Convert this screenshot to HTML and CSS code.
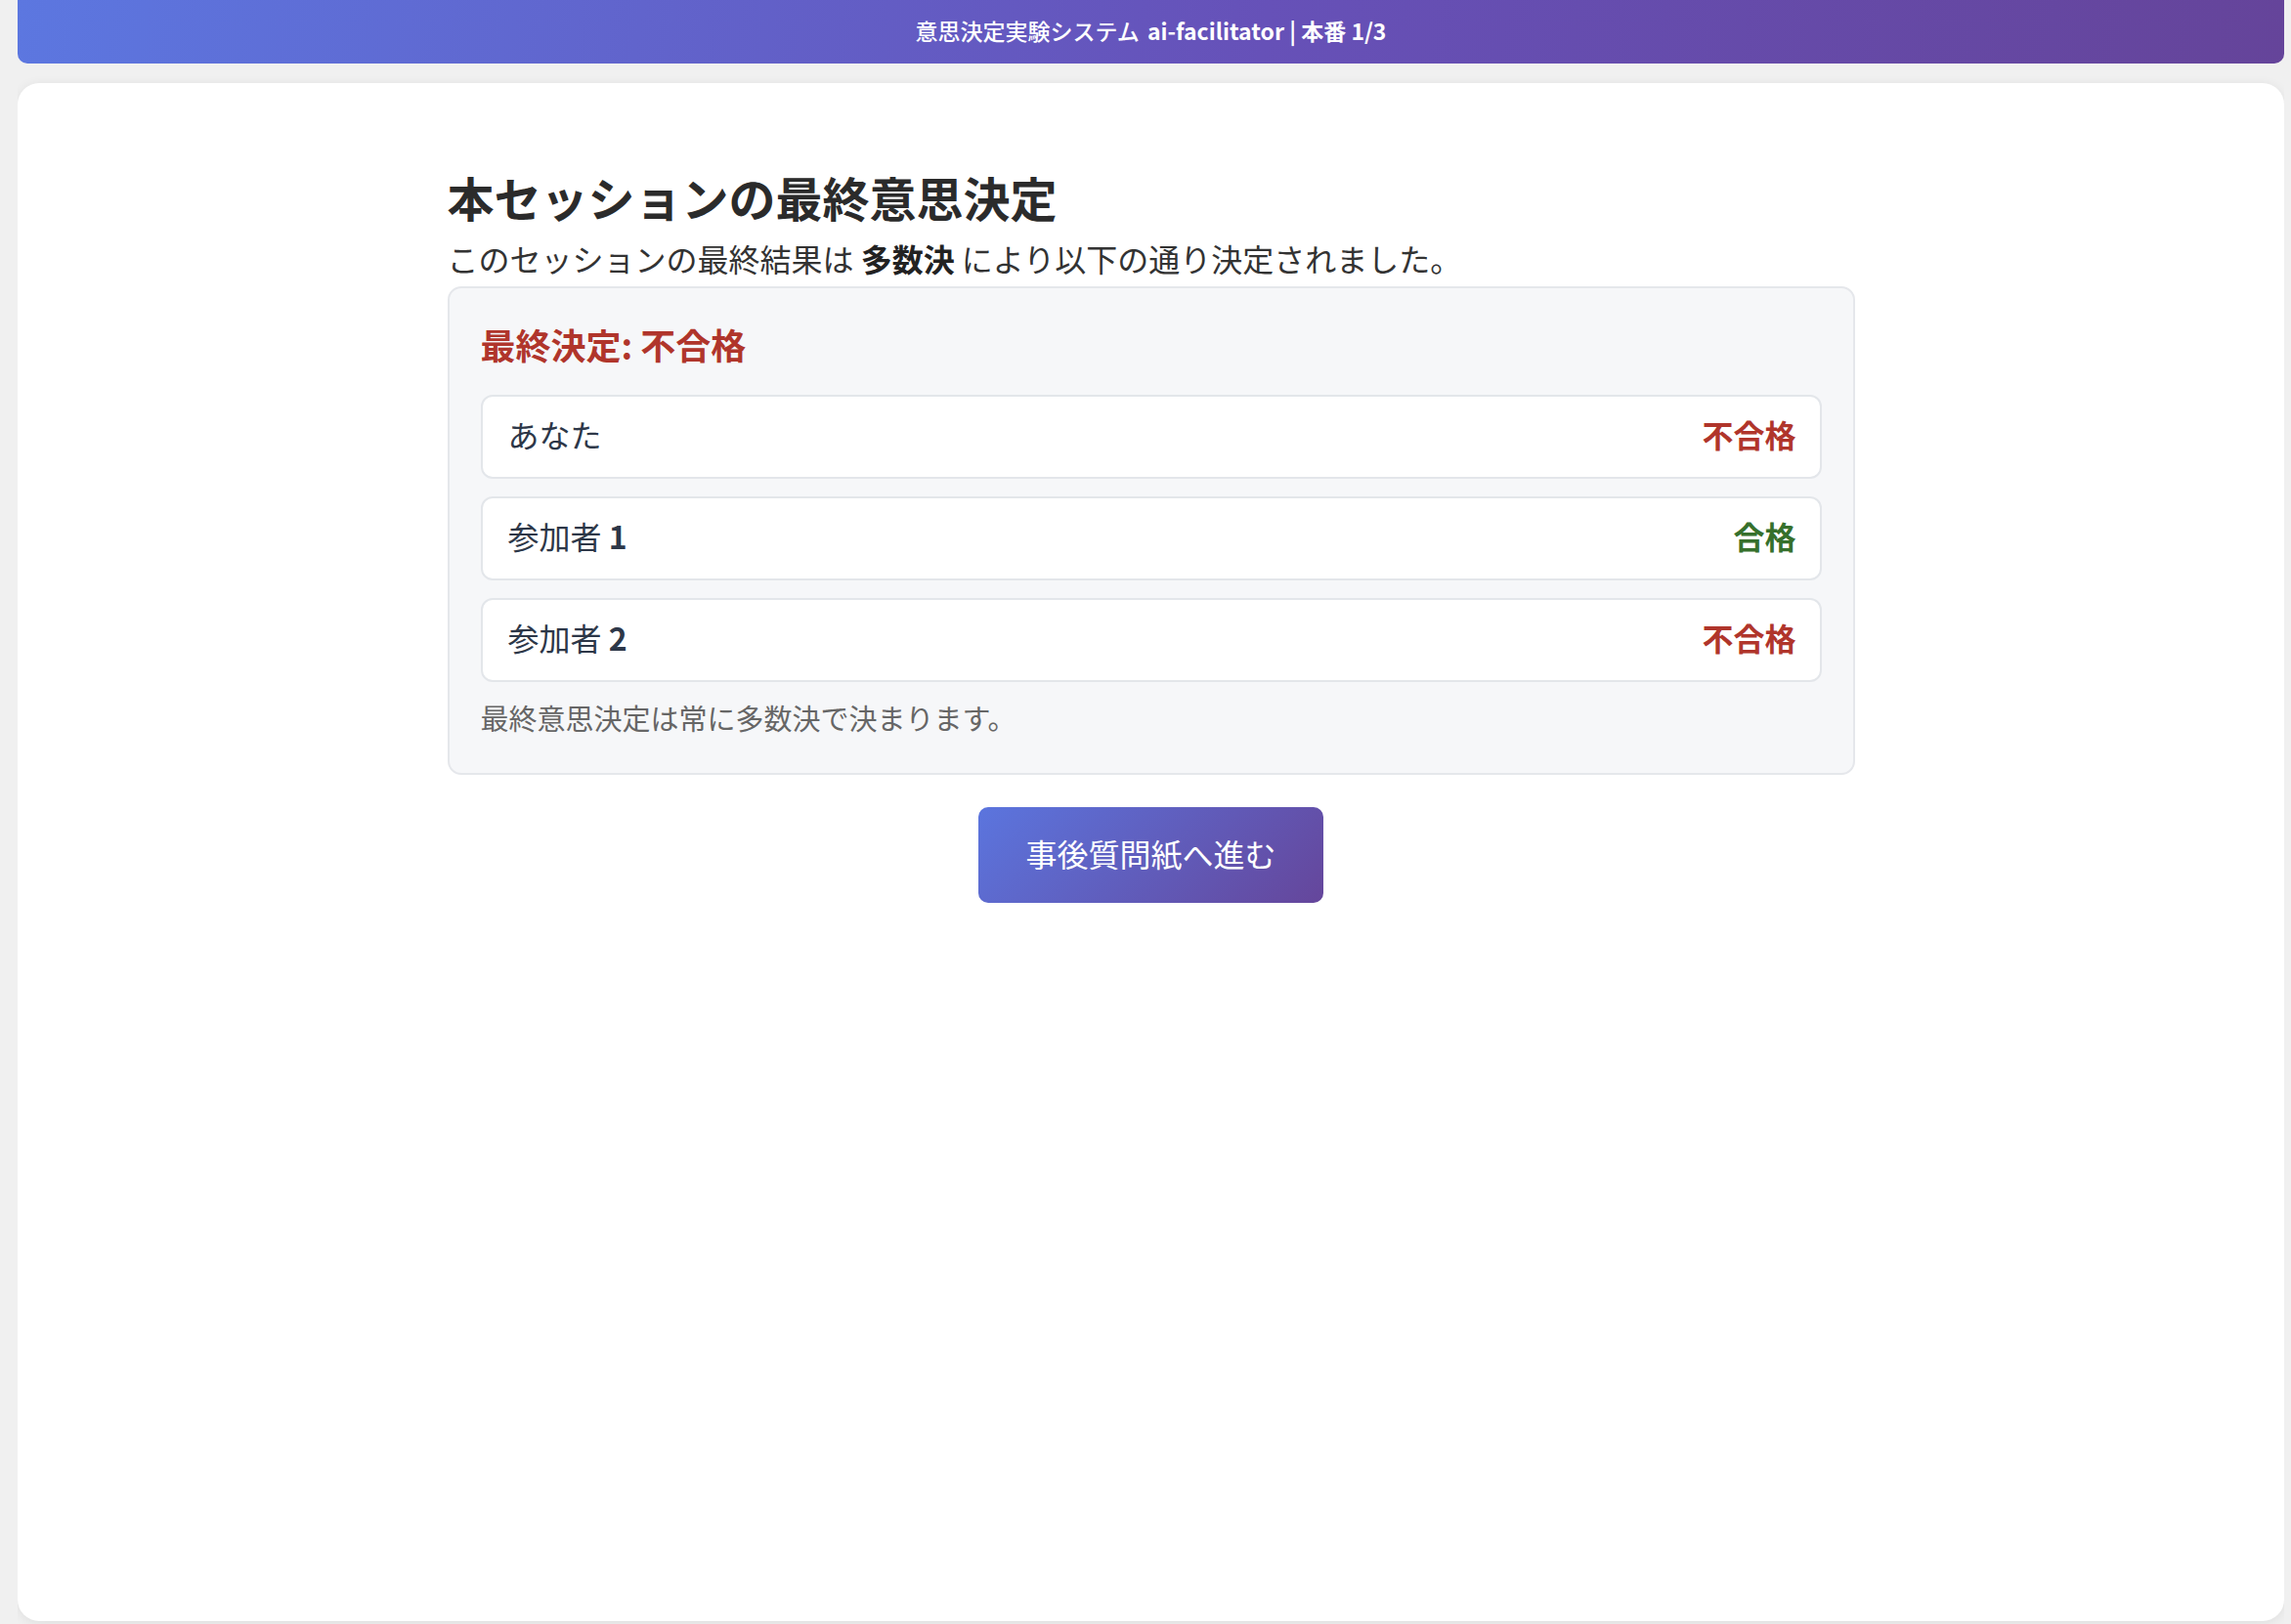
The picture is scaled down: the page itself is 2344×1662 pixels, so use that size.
FILE: index.html
```html
<!DOCTYPE html>
<html lang="ja">
<head>
<meta charset="utf-8">
<title>意思決定実験システム</title>
<link rel="stylesheet" href="styles.css">
</head>
<body>
<header class="topbar">意思決定実験システム <b>ai-facilitator | 本番 1/3</b></header>
<main class="card">
  <div class="container">
    <h1 class="title">本セッションの最終意思決定</h1>
    <p class="lead">このセッションの最終結果は <strong>多数決</strong> により以下の通り決定されました。</p>
    <section class="result">
      <h3 class="final fail">最終決定: 不合格</h3>
      <div class="rows">
        <div class="row"><span class="who">あなた</span><span class="verdict fail">不合格</span></div>
        <div class="row"><span class="who">参加者 <b>1</b></span><span class="verdict pass">合格</span></div>
        <div class="row"><span class="who">参加者 <b>2</b></span><span class="verdict fail">不合格</span></div>
      </div>
      <p class="note">最終意思決定は常に多数決で決まります。</p>
    </section>
    <div class="actions"><button class="next">事後質問紙へ進む</button></div>
  </div>
</main>
</body>
</html>
```
FILE: styles.css
```css
* { box-sizing: border-box; }
html, body { height: 100%; }
body {
  margin: 0 7px 0 18px;
  background: #f0f0f0;
  font-family: "Noto Sans CJK JP", "Noto Sans", sans-serif;
  color: #333;
  overflow: hidden;
}
.topbar {
  height: 65px;
  display: flex;
  align-items: center;
  justify-content: center;
  gap: 8px;
  color: #fff;
  font-size: 23px;
  font-weight: 500;
  padding-bottom: 3px;
  background: linear-gradient(100deg, #5c77e0 0%, #6651b8 55%, #65449a 100%);
  border-radius: 0 0 10px 10px;
  margin-bottom: 20px;
}
.topbar b { font-weight: 700; }
.card {
  background: #fff;
  border-radius: 22px;
  box-shadow: 0 2px 12px rgba(0,0,0,0.08);
  min-height: 1574px;
  padding: 88px 0 40px;
}
.container {
  max-width: 1440px;
  margin: 0 auto;
}
.title {
  margin: 0;
  font-size: 48px;
  line-height: 1.2;
  font-weight: 700;
  color: #2b2b2b;
}
.lead {
  margin: 9px 0 5px;
  font-size: 32px;
  line-height: 48px;
  color: #333;
}
.lead strong { font-weight: 700; color: #222; }
.result {
  background: #f6f7f9;
  border: 2px solid #e5e7eb;
  border-radius: 14px;
  padding: 34px 32px 36px;
}
.final {
  margin: 0 0 28px;
  font-size: 36px;
  line-height: 47px;
  font-weight: 700;
}
.fail { color: #b0352b; }
.pass { color: #36702c; }
.rows {
  display: flex;
  flex-direction: column;
  gap: 18px;
}
.row {
  display: flex;
  justify-content: space-between;
  align-items: center;
  background: #fff;
  border: 2px solid #e3e6ea;
  border-radius: 12px;
  padding: 14px 24px 20px 26px;
  font-size: 32px;
  line-height: 48px;
}
.who { color: #2d3748; }
.who b { font-weight: 700; }
.verdict { font-weight: 700; }
.note {
  margin: 15px 0 0;
  font-size: 29px;
  line-height: 42px;
  color: #666;
}
.actions {
  display: flex;
  justify-content: center;
  margin-top: 33px;
}
.next {
  font-family: inherit;
  font-size: 32px;
  line-height: 48px;
  color: #fff;
  border: none;
  border-radius: 10px;
  padding: 23px 48px 27px;
  background: linear-gradient(135deg, #5b75de 0%, #65469b 100%);
  cursor: pointer;
}
```
